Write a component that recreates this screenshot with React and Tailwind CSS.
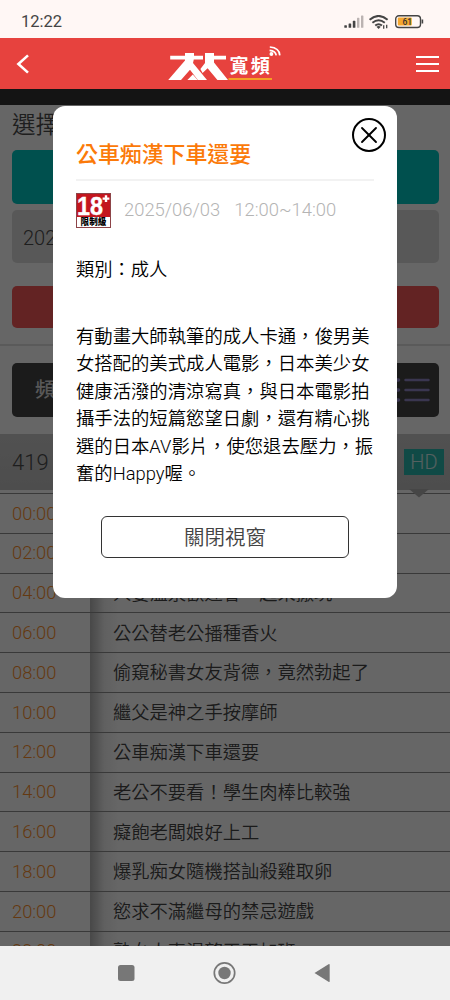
import { X } from "lucide-react";

const SCHEDULE = [
  { time: "00:00", title: "" },
  { time: "02:00", title: "" },
  { time: "04:00", title: "人妻溫泉歡迎會一起來撒玩" },
  { time: "06:00", title: "公公替老公播種香火" },
  { time: "08:00", title: "偷窺秘書女友背德，竟然勃起了" },
  { time: "10:00", title: "繼父是神之手按摩師" },
  { time: "12:00", title: "公車痴漢下車還要" },
  { time: "14:00", title: "老公不要看！學生肉棒比較強" },
  { time: "16:00", title: "癡飽老闆娘好上工" },
  { time: "18:00", title: "爆乳痴女隨機搭訕殺雞取卵" },
  { time: "20:00", title: "慾求不滿繼母的禁忌遊戲" },
  { time: "22:00", title: "熟女人妻渴望天天加班" },
];

const DESCRIPTION = [
  "有動畫大師執筆的成人卡通，俊男美",
  "女搭配的美式成人電影，日本美少女",
  "健康活潑的清涼寫真，與日本電影拍",
  "攝手法的短篇慾望日劇，還有精心挑",
  "選的日本AV影片，使您退去壓力，振",
  "奮的Happy喔。",
];

function StatusBar() {
  return (
    <div className="flex h-[38px] shrink-0 items-center justify-between bg-[#fff7f5] pt-[7px] pr-[26px] pl-[21px]">
      <span className="text-[16.5px] leading-none text-[#444]">12:22</span>
      <svg width="80" height="16" viewBox="0 0 80 16" fill="none">
        <g fill="#444">
          <rect x="0.3" y="10.2" width="2.6" height="2.6" rx="0.6" />
          <rect x="4.6" y="8.4" width="2.6" height="4.4" rx="0.6" />
          <rect x="8.8" y="5.8" width="2.6" height="7" rx="0.6" />
        </g>
        <g fill="#bbb3b2">
          <rect x="13" y="2.8" width="2.4" height="10" rx="0.6" />
          <rect x="17" y="0.5" width="2.4" height="12.3" rx="0.6" />
        </g>
        <g stroke="#444" strokeWidth="1.9">
          <path d="M25.6 4.8q9-7.8 18 0" />
          <path d="M28.4 7.8q6.2-5.2 12.4 0" />
          <path d="M31.2 10.6q3.4-2.6 6.8 0" />
        </g>
        <path d="M34.6 14l-2.2-2.3q2.2-1.6 4.4 0z" fill="#444" />
        <path d="M39.7 13.8V10.3M42.7 9.8v3.5" stroke="#444" strokeWidth="1.3" />
        <rect x="51.7" y="0.7" width="24.8" height="11.8" rx="3.2" stroke="#444" strokeWidth="1.4" />
        <rect x="53.8" y="2.6" width="14" height="8" rx="1" fill="#f5a72f" />
        <path d="M78.4 4.5v4" stroke="#444" strokeWidth="1.6" />
        <text x="63.3" y="9.8" textAnchor="middle" fontSize="8.5" fontWeight="500" fill="#333" fontFamily="Roboto">
          61
        </text>
      </svg>
    </div>
  );
}

function Logo() {
  return (
    <svg width="120" height="44" viewBox="0 0 120 44" className="shrink-0">
      <g fill="#fff">
        <path d="M6.2 13.8H21V11H30V13.8H39V17.4H29.8L29 21L43 38H33.8L26 27.8L17 38H4.2L21 18.6V17.4H6.2z" />
        <path d="M41 11H50V13.8H62V17.4H50V20.6L64 38H53.4L43.6 26.2L38.6 31L36.4 27L41 21z" />
        <path d="M28.8 32.4L33.6 38H23.4z" />
      </g>
      <text
        x="65.5"
        y="31.4"
        fontSize="19"
        fontWeight="700"
        letterSpacing="2.2"
        fill="#fff"
        fontFamily="Noto Sans CJK TC, sans-serif"
      >
        寬頻
      </text>
      <path d="M64.5 37h43.5" stroke="#f8c11c" strokeWidth="1.6" />
      <g fill="none" stroke="#fff" strokeWidth="1.7">
        <path d="M105.8 5q9.6.6 10 8.4" />
        <path d="M105.6 8.4q6 .6 6.6 5" />
      </g>
      <circle cx="107.4" cy="12" r="1.9" fill="#fff" />
    </svg>
  );
}

function Header() {
  return (
    <header className="flex h-[51px] shrink-0 items-center justify-between bg-[#e7423e] pr-[11px] pl-4">
      <svg width="14" height="20" viewBox="0 0 14 20" fill="none" stroke="#fff" strokeWidth="2.6">
        <path d="M12 1.4L2.4 10L12 18.6" />
      </svg>
      <div className="ml-[2px] h-11">
        <Logo />
      </div>
      <div className="flex w-[23px] flex-col gap-[5px]">
        <span className="h-[2px] bg-white" />
        <span className="h-[2px] bg-white" />
        <span className="h-[2px] bg-white" />
      </div>
    </header>
  );
}

function ChannelGuide() {
  return (
    <div className="text-[#4b4b4b]">
      <div className="pr-[11px] pl-3">
        <h2 className="h-[45px] pt-[4px] text-[23.5px] leading-8 font-[350]">選擇</h2>
        <div className="h-[54px] rounded-[5px] bg-[#00c8c3]" />
        <div className="mt-[6px] flex h-[53px] items-center rounded-[5px] bg-[#dcdcdc] pt-[2px] pl-[11px] text-xl font-light">
          2025
        </div>
        <div className="mt-[23px] h-[41.5px] rounded-[5px] bg-[#f85757]" />
      </div>
      <div className="mt-[16.5px] h-[1.5px] bg-[#e2e2e2]" />
      <div className="mt-[17.5px] mr-[11px] ml-3 flex h-[54px] items-center justify-between rounded-[5px] bg-[#444] pr-[9px] pl-[23px]">
        <span className="text-xl font-medium text-[#ddd]">頻道</span>
        <svg width="38" height="24" viewBox="0 0 38 24" stroke="#9187c8" strokeWidth="2.4" strokeLinecap="round">
          <path d="M13.5 2h23M13.5 12h23M13.5 22h23" />
          <path d="M5 2h1.5M5 12h1.5M5 22h1.5" strokeWidth="3.6" />
        </svg>
      </div>
      <div className="relative mt-[17px] flex h-14 items-center justify-between bg-linear-to-b from-[#cbcbcb] to-[#c0c0c0] pr-[6px] pl-3">
        <span className="text-[22px] font-light">419</span>
        <span className="flex h-[26px] w-10 items-center justify-center bg-[#2ab9b0] text-xl font-light text-white/80">
          HD
        </span>
        <svg width="20" height="9" viewBox="0 0 20 9" className="absolute top-[55px] right-[21px]" fill="#b0b0b0">
          <path d="M0 0H20L10 8.5z" />
        </svg>
      </div>
      <ul className="mt-[3px]">
        {SCHEDULE.map((row) => (
          <li key={row.time} className="flex h-[39.8px] border-t border-[#8e8e8e]">
            <span className="flex w-[90px] items-center pl-3 text-[18.3px] font-light text-[#fb8f2c]">{row.time}</span>
            <span className="flex flex-1 items-center bg-linear-to-r from-[#b4b4b4] via-[#f0f0f0] via-[4%] to-white to-[8%] pt-px pl-[23px] text-[18.3px] font-[350] whitespace-nowrap text-[#444]">
              {row.title}
            </span>
          </li>
        ))}
      </ul>
    </div>
  );
}

function RatingBadge() {
  return (
    <div className="flex h-[35px] w-[35px] shrink-0 flex-col border border-[#8d4448] bg-white">
      <svg width="33" height="23" viewBox="0 0 33 23" className="shrink-0">
        <rect width="33" height="23" fill="#c3161e" />
        <text
          x="0"
          y="20.5"
          fontSize="26.5"
          fontWeight="700"
          textLength="26"
          lengthAdjust="spacingAndGlyphs"
          fill="#fff"
          stroke="#fff"
          strokeWidth="0.4"
          fontFamily="Liberation Sans"
        >
          18
        </text>
        <path d="M29 1.2v6.800M25.6 4.600h6.800" stroke="#fff" strokeWidth="2.4" />
      </svg>
      <span className="text-center text-[8.6px] leading-[10px] font-black text-black">限制級</span>
    </div>
  );
}

function ProgramModal() {
  return (
    <section className="relative h-[492px] w-[344px] rounded-xl bg-white px-[23px]">
      <button
        type="button"
        aria-label="關閉"
        className="absolute top-3 right-[11px] flex h-[34px] w-[34px] items-center justify-center rounded-full border-2 border-black text-black"
      >
        <X className="h-7 w-7 shrink-0" strokeWidth={1.6} />
      </button>
      <h3 className="h-[75px] border-b-2 border-[#f2f2f2] pt-[33px] text-[21.9px] leading-8 font-medium text-[#fb7a09]">
        公車痴漢下車還要
      </h3>
      <div className="mt-3 flex items-center text-[18.4px] font-light text-[#b4b4b4]">
        <RatingBadge />
        <span className="-mt-px ml-[13px] leading-none">2025/06/03</span>
        <span className="-mt-px ml-[14px] leading-none">12:00~14:00</span>
      </div>
      <p className="mt-[28px] text-[18.3px] leading-[28px] font-[350] text-black">類別：成人</p>
      <p className="mt-[38.5px] text-[18.35px] leading-[27.5px] font-[350] whitespace-nowrap text-black">
        {DESCRIPTION.map((line) => (
          <span key={line} className="block">
            {line}
          </span>
        ))}
      </p>
      <button
        type="button"
        className="mt-[28px] ml-[25px] flex h-[42px] w-[248px] items-center justify-center rounded-md border border-[#333] pt-[3px] text-[20.5px] font-[350] text-[#444]"
      >
        關閉視窗
      </button>
    </section>
  );
}

function NavigationBar() {
  return (
    <div className="flex h-[54px] shrink-0 items-center justify-center bg-[#f0f0f0]">
      <svg width="214" height="24" viewBox="0 0 214 24" fill="#777">
        <rect x="0" y="4" width="16.5" height="16" rx="2.5" />
        <circle cx="106.5" cy="12" r="10.2" fill="none" stroke="#777" strokeWidth="1.7" />
        <circle cx="106.5" cy="12" r="6.2" />
        <path d="M196.5 12L210.5 3.2q1.2-.6 1.2.8v16.2q0 1.2-1.2.6z" />
      </svg>
    </div>
  );
}

export default function App() {
  return (
    <div className="flex h-[1000px] w-[450px] flex-col overflow-hidden bg-white font-[Roboto,'Noto_Sans_CJK_TC',sans-serif]">
      <StatusBar />
      <Header />
      <div className="h-4 shrink-0 bg-[#141414]" />
      <main className="relative min-h-0 flex-1 overflow-hidden">
        <ChannelGuide />
        <div className="absolute inset-0 flex items-start justify-center bg-black/60 pt-px">
          <ProgramModal />
        </div>
      </main>
      <NavigationBar />
    </div>
  );
}
